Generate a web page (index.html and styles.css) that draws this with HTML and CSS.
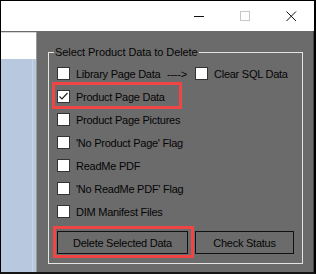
FILE: index.html
```html
<!DOCTYPE html>
<html>
<head>
    <title>Delete Product Data</title>
    <link rel="stylesheet" href="styles.css">
</head>
<body>
    <div class="window">
        <div class="titlebar">
            <div class="caption-btn">
                <svg width="11" height="11" viewBox="0 0 11 11"><path d="M0 5.5H10" stroke="#111" stroke-width="1"/></svg>
            </div>
            <div class="caption-btn">
                <svg width="11" height="11" viewBox="0 0 11 11"><rect x="0.5" y="0.5" width="9" height="9" fill="none" stroke="#c6c6c6"/></svg>
            </div>
            <div class="caption-btn">
                <svg width="11" height="11" viewBox="0 0 11 11"><path d="M0.5 0.5L10 10M10 0.5L0.5 10" stroke="#111" stroke-width="1"/></svg>
            </div>
        </div>

        <div class="main">
            <div class="sidebar">
                <div class="sidebar-top"></div>
                <div class="sidebar-list"></div>
            </div>

            <div class="group">
                <span class="group-title">Select Product Data to Delete</span>

                <div class="row">
                    <span class="box"></span>
                    <span class="label lib">Library Page Data</span>
                    <span class="arrow">----&gt;</span>
                    <span class="box"></span>
                    <span class="label">Clear SQL Data</span>
                </div>
                <div class="row">
                    <span class="box checked">
                        <svg width="11" height="11" viewBox="0 0 11 11"><path d="M1.5 5.5L4 8L9.5 2" fill="none" stroke="#222" stroke-width="1.2"/></svg>
                    </span>
                    <span class="label">Product Page Data</span>
                </div>
                <div class="row">
                    <span class="box"></span>
                    <span class="label">Product Page Pictures</span>
                </div>
                <div class="row">
                    <span class="box"></span>
                    <span class="label">'No Product Page' Flag</span>
                </div>
                <div class="row">
                    <span class="box"></span>
                    <span class="label">ReadMe PDF</span>
                </div>
                <div class="row">
                    <span class="box"></span>
                    <span class="label">'No ReadMe PDF' Flag</span>
                </div>
                <div class="row">
                    <span class="box"></span>
                    <span class="label">DIM Manifest Files</span>
                </div>

                <div class="buttons">
                    <div class="btn btn-delete">Delete Selected Data</div>
                    <div class="btn btn-status">Check Status</div>
                </div>
            </div>
        </div>

        <!-- annotation boxes -->
        <div class="mark mark-product"></div>
        <div class="mark mark-delete"></div>
    </div>
</body>
</html>
```

FILE: styles.css
```css
body {
    margin: 0;
    font-family: "Liberation Sans", Arial, sans-serif;
    font-size: 11px;
    letter-spacing: -0.25px;
    color: #050505;
}
.window {
    position: relative;
    width: 316px;
    height: 274px;
    box-sizing: border-box;
    border-top: 1px solid #000;
    border-left: 1px solid #000;
    border-right: 2px solid #000;
    border-bottom: 2px solid #151515;
    background: #fff;
    display: flex;
    flex-direction: column;
}
.titlebar {
    height: 30px;
    display: flex;
    justify-content: flex-end;
    background: #fff;
}
.caption-btn {
    width: 46px;
    display: flex;
    align-items: center;
    justify-content: center;
}
.caption-btn svg { display: block; }
.main {
    flex: 1;
    display: flex;
    background: #6b6b6b;
    border-right: 1px solid #444;
}
.sidebar {
    width: 37px;
    margin-top: 1px;
    display: flex;
    flex-direction: column;
    border-right: 1px solid #9a9a9a;
    box-sizing: border-box;
}
.sidebar-top {
    height: 26px;
    background: #fff;
    border-top: 1px solid #d6d6d6;
}
.sidebar-list {
    flex: 1;
    background: #b8c8de;
    border-right: 1px solid #c9d6e8;
    margin-right: 3px;
    box-shadow: 3px 0 0 #b8c8de;
}
.group {
    position: relative;
    flex: 1;
    margin: 21px 10px 8px 11px;
    padding: 9px 8px 0 8px;
    border: 1px solid #e4e4e4;
}
.group-title {
    position: absolute;
    top: -7px;
    left: 5px;
    padding: 0 1px;
    background: #6b6b6b;
    line-height: 13px;
    letter-spacing: -0.08px;
}
.row {
    height: 23px;
    display: flex;
    align-items: center;
}
.box {
    width: 13px;
    height: 13px;
    box-sizing: border-box;
    background: #fff;
    border: 1px solid #333;
    flex: none;
    display: flex;
    align-items: center;
    justify-content: center;
}
.box.checked svg { display: block; }
.label {
    margin-left: 6px;
    white-space: nowrap;
}
.lib {
    width: 91px;
}
.arrow {
    width: 28px;
}
.buttons {
    display: flex;
    gap: 7px;
    margin-top: 8px;
}
.btn {
    height: 23px;
    box-sizing: border-box;
    border: 1px solid #111;
    display: flex;
    align-items: center;
    justify-content: center;
}
.btn-delete { width: 131px; }
.btn-status { width: 99px; }
.mark {
    position: absolute;
    border: 3px solid #ef4545;
    box-sizing: border-box;
}
.mark-product {
    left: 51px;
    top: 81px;
    width: 130px;
    height: 27px;
}
.mark-delete {
    left: 52px;
    top: 225px;
    width: 141px;
    height: 32px;
}
```
